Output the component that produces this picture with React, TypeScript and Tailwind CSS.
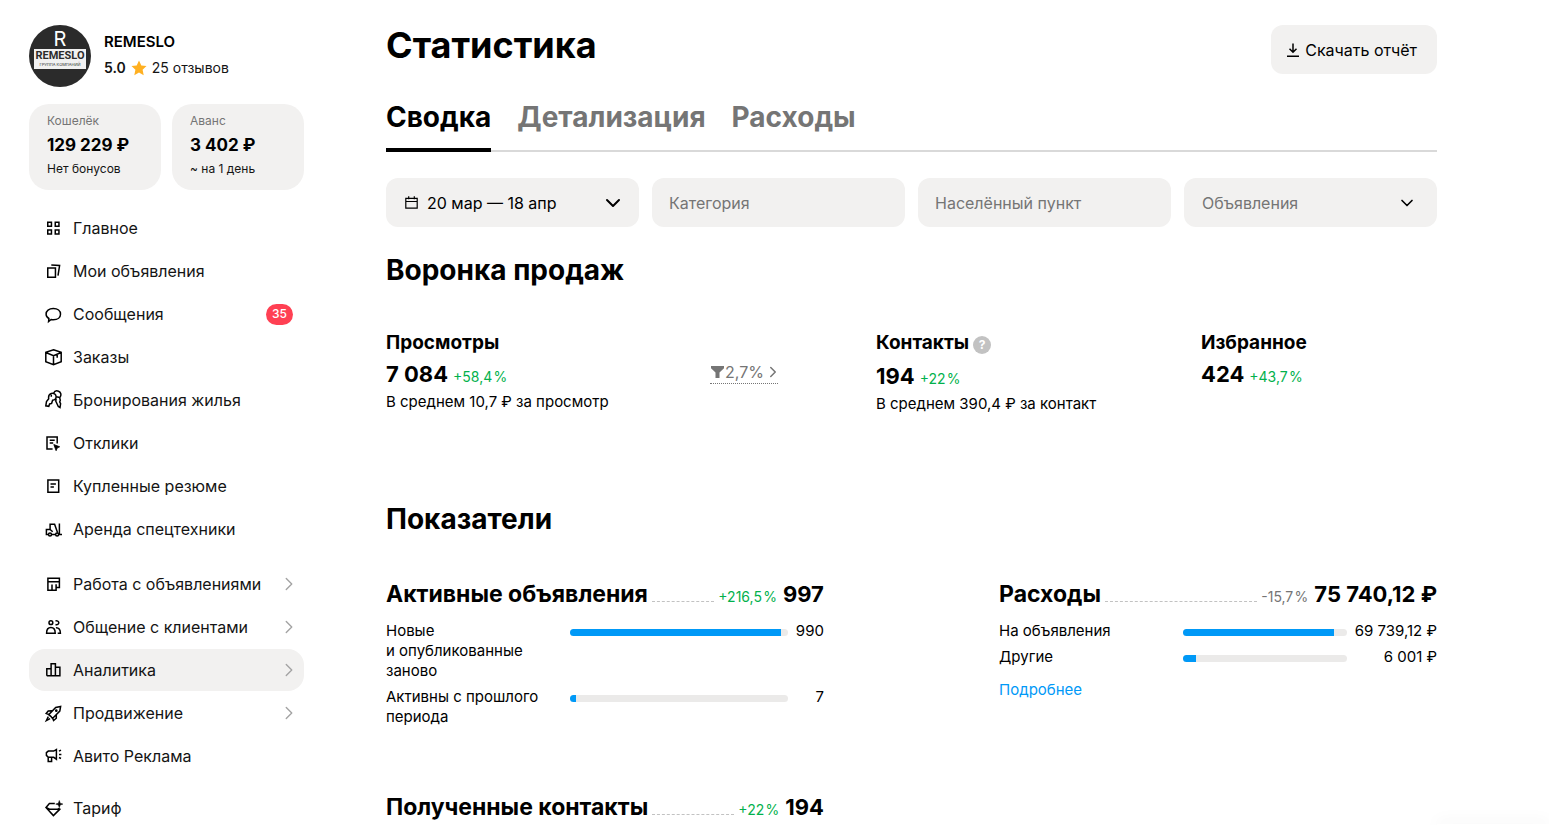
import type { ReactNode } from 'react'
import { ChevronDown, ChevronRight } from 'lucide-react'

type NavItem = { label: string; icon: ReactNode; badge?: number; nested?: boolean; active?: boolean }

const mainNav: NavItem[] = [
  {
    label: 'Главное',
    icon: <path d="M3.75 4.25h3.7v4h-3.7zM11.25 4.25h3.7v4h-3.7zM3.75 12h3.7v4h-3.7zM11.25 12h3.7v4h-3.7z" />,
  },
  {
    label: 'Мои объявления',
    icon: <path d="M3.75 7h7.7v9.3h-7.7zM7.3 4l8.3.5-1.6 10.2" />,
  },
  {
    label: 'Сообщения',
    badge: 35,
    icon: <path d="M4.6 17.6l.3-3.1C3 13.4 2.1 11.9 2.1 10.2c0-3.2 2.8-5.6 7.2-5.6s7.2 2.4 7.2 5.6-2.8 5.6-7.2 5.6c-.8 0-1.5-.1-2.2-.3z" />,
  },
  {
    label: 'Заказы',
    icon: <path d="M9.5 2.7l7.7 2.6v9.4l-7.7 3.1-7.7-3.1V5.3zM1.8 5.5l7.7 3.3 7.7-3.3M9.5 8.8v8.8M13.2 7.2v3.6" />,
  },
  {
    label: 'Бронирования жилья',
    icon: (
      <path d="M1.8 15.8l.7-4.3 2.2-2.7c-.4-2.6.5-4.8 2.5-5.4 2.6-.7 5 .9 4.9 3.3-.1 2.2-1.6 3.4-3.5 3.5l-1 3.3-2 .5-.8 2.3zM7.3 4.5v2.2M9.6 3.2c.8-1.9 3-2.7 4.9-2 2.3.9 3 3.5 1.8 5.5l-.7.8.7 2.8-.6 1.6.9 1.7-.6 3.9-1.7-1-2.5-5.3.3-2.5M12.5 6.8l3.2.8" />
    ),
  },
  {
    label: 'Отклики',
    icon: (
      <>
        <path d="M13.2 10.5V3.9H3v12.2h5.6M5.7 7.2h5M5.7 10h3.5" />
        <path d="M9.8 11.5l5.9 2.3-2.5 1.2-1.1 2.7z" fill="currentColor" strokeWidth="0.8" />
      </>
    ),
  },
  {
    label: 'Купленные резюме',
    icon: <path d="M3.9 4.1h10.8v12.1H3.9zM6.5 8h5.4M6.5 11h3.4" />,
  },
  {
    label: 'Аренда спецтехники',
    icon: (
      <>
        <path d="M4.2 15.4H2.4v-4.9h3.7V5.3h4.5l3 8.4M6.1 10.5l2.6 2.3M7.8 15.4h3.6M15.4 4.5v11.1H18" />
        <circle cx="6" cy="15.5" r="1.5" />
        <circle cx="13.1" cy="15.5" r="1.5" />
      </>
    ),
  },
]

const toolsNav: NavItem[] = [
  {
    label: 'Работа с объявлениями',
    nested: true,
    icon: <path d="M15.4 8v5.4h-3.3M3.9 8v8.3h8.2v-6M3.9 4.2h11.5v3.6H3.9zM8 16.2v-5.6" />,
  },
  {
    label: 'Общение с клиентами',
    nested: true,
    icon: (
      <>
        <circle cx="6.9" cy="5.7" r="1.9" />
        <path d="M11.5 4c1.6-.6 3.3.2 3.3 1.7s-1.6 2.4-3.3 1.8M2.6 16.2c0-3.5 1.6-5.6 4.3-5.6s4.3 2.1 4.3 5.6zM11.9 10.7c2.9-.2 4.5 1.9 4.5 5.5h-2.7" />
      </>
    ),
  },
  {
    label: 'Аналитика',
    nested: true,
    active: true,
    icon: <path d="M2.8 15.7V8.8h4.3v6.9M7.1 15.7V3.8h4.3v11.9M11.4 7.2h4.5v8.5H2.8" />,
  },
  {
    label: 'Продвижение',
    nested: true,
    icon: (
      <>
        <path d="M16.6 3.5l-.8 4.6-7.3 7.4-1.7-2.1-2.1-1.7 7-7.2zM8 7.8l-3.8.2-2 2.4 2.7 1.1M12.3 11.6v3.6l-2.7 2.3-.9-2.3M4.3 13.7l-1.9 3.8 3.7-1.8" />
        <circle cx="12.3" cy="7.7" r="0.6" fill="currentColor" />
      </>
    ),
  },
  {
    label: 'Авито Реклама',
    icon: <path d="M12.4 3.6v9.6L9.7 11.3H4.3L2.4 9.4V6.7l1.9-1.6h5.4zM4.2 11.3v4.2h3.4v-4.2M15 5.2l2-1M15 8.4h2.4M15 11.5l2 1" />,
  },
]

const tariffNav: NavItem[] = [
  {
    label: 'Тариф',
    icon: (
      <>
        <path d="M10.8 5.6H5.4L2 9.4l7.4 8.2 7-7M2 9.4l3.5 1.8h8.2l1.7-.9" />
        <path d="M15.3 2.5l.9 2.7 2.7.9-2.7.9-.9 2.7-.9-2.7-2.7-.9 2.7-.9z" fill="currentColor" strokeWidth="0.5" />
      </>
    ),
  },
]

function NavGroup({ items }: { items: NavItem[] }) {
  return (
    <ul className="flex flex-col gap-px">
      {items.map((item) => (
        <li key={item.label}>
          <a
            href="#"
            className={`flex h-[42px] items-center gap-[9px] rounded-2xl pl-[15px] pr-[11px] text-base text-[#141414] ${
              item.active ? 'bg-[#f2f1f0]' : ''
            }`}
          >
            <svg width="20" height="20" viewBox="0 0 20 20" fill="none" stroke="currentColor" strokeWidth="1.5" className="shrink-0 text-black">
              {item.icon}
            </svg>
            <span className="flex-1 whitespace-nowrap">{item.label}</span>
            {item.badge && (
              <span className="flex h-[21px] w-[27px] items-center justify-center rounded-full bg-[#ff4053] text-xs font-medium text-white">
                {item.badge}
              </span>
            )}
            {item.nested && <ChevronRight size={22} strokeWidth={1.5} className="-mr-[7px] shrink-0 text-[#a3a3a3]" />}
          </a>
        </li>
      ))}
    </ul>
  )
}

function Wallet({ title, amount, note }: { title: string; amount: string; note: string }) {
  return (
    <a href="#" className="flex h-[86px] flex-1 flex-col rounded-[20px] bg-[#f2f1f0] pl-[18px] pt-2">
      <span className="text-xs leading-[18px] text-[#757575]">{title}</span>
      <span className="text-[17px] font-bold leading-[30px]">{amount}</span>
      <span className="text-xs leading-[18px] text-[#141414]">{note}</span>
    </a>
  )
}

// hair space between the number and the percent sign
function Delta({ value }: { value: string }) {
  return (
    <span className={`text-sm font-normal ${value.startsWith('+') ? 'text-[#02b14c]' : 'text-[#757575]'}`}>
      {value}
      {'\u200a%'}
    </span>
  )
}

function FunnelMetric({ title, value, delta, note, hint }: { title: string; value: string; delta: string; note?: string; hint?: boolean }) {
  return (
    <div>
      <h3 className={`flex items-center gap-1 text-[19px] font-bold leading-7 ${hint ? 'mb-[2px]' : ''}`}>
        {title}
        {hint && (
          <button aria-label="Подсказка" className="mt-1 flex size-[18px] items-center justify-center rounded-full bg-[#c2c2c2] text-xs font-bold text-white">
            ?
          </button>
        )}
      </h3>
      <p className="flex items-baseline gap-[5px] text-[22px] font-bold leading-[35px]">
        {value} <Delta value={delta} />
      </p>
      {note && <p className="text-[15px] leading-5">{note}</p>}
    </div>
  )
}

type Row = { label: string; value: string; percent: number }

function Indicator({ title, total, delta, rows = [], children }: { title: string; total: string; delta: string; rows?: Row[]; children?: ReactNode }) {
  return (
    <section>
      <div className="flex items-baseline font-bold leading-8">
        <h3 className="text-[23px] leading-8">{title}</h3>
        <span className="mx-1 min-w-4 flex-1 border-b border-dashed border-[#c2c2c2]" />
        <Delta value={delta} />
        <span className="ml-[6px] text-[22px]">{total}</span>
      </div>
      <div className="mt-[11px] grid grid-cols-[42%_1fr_auto] gap-y-[6px] text-[15px] leading-5">
        {rows.map((row) => (
          <div key={row.label} className="col-span-3 grid grid-cols-subgrid">
            <span className="pr-7">{row.label}</span>
            <div className="mt-2 h-[7px] overflow-hidden rounded-full bg-[#ebeae9]">
              <div className="h-full bg-[#0099f7]" style={{ width: `${row.percent}%` }} />
            </div>
            <span className="pl-2 text-right">{row.value}</span>
          </div>
        ))}
      </div>
      {children}
    </section>
  )
}

export default function App() {
  const tabs = ['Сводка', 'Детализация', 'Расходы']
  const field = 'h-[49px] w-full rounded-xl bg-[#f2f1f0] text-base'

  return (
    <div className="flex min-h-screen gap-[82px] bg-white pl-[29px] pr-28 pt-[25px] font-['Inter','Noto_Sans',sans-serif] text-black">
      <aside className="w-[275px] shrink-0">
        <div className="flex items-center gap-[13px]">
          <div className="flex size-[62px] flex-col items-center overflow-hidden rounded-full bg-[#2b2b2b] pt-[5px]">
            <span className="text-xl leading-[19px] text-white">R</span>
            <div className="flex h-5 w-[52px] flex-col items-center bg-[#f1f1f1] text-[#2b2b2b]">
              <span className="font-[Roboto] text-[11px] font-bold leading-[14px]">REMESLO</span>
              <span className="text-[4px] leading-[4px]">ГРУППА КОМПАНИЙ</span>
            </div>
          </div>
          <div className="pb-[2px]">
            <p className="text-[15px] font-semibold leading-[26px]">REMESLO</p>
            <p className="flex items-center text-sm leading-[26px] text-[#141414]">
              <span className="font-semibold">5.0</span>
              <svg width="16" height="16" viewBox="0 0 16 16" fill="#ffb021" className="mx-[5px]">
                <path d="M8 .5l2.3 5 5.2.6-3.9 3.6 1.1 5.5L8 12.5l-4.7 2.7 1.1-5.5L.5 6.1l5.2-.6z" />
              </svg>
              <a href="#">25 отзывов</a>
            </p>
          </div>
        </div>

        <div className="mt-[17px] flex gap-[11px]">
          <Wallet title="Кошелёк" amount="129 229 ₽" note="Нет бонусов" />
          <Wallet title="Аванс" amount="3 402 ₽" note="~ на 1 день" />
        </div>

        <nav className="mt-[17px] flex flex-col">
          <NavGroup items={mainNav} />
          <div className="mb-[10px] mt-[13px]">
            <NavGroup items={toolsNav} />
          </div>
          <NavGroup items={tariffNav} />
        </nav>
      </aside>

      <main className="min-w-0 flex-1">
        <header className="flex items-start justify-between">
          <h1 className="text-4xl font-bold leading-10">Статистика</h1>
          <button className="flex h-[49px] items-center gap-1 rounded-xl bg-[#f2f1f0] pl-[14px] pr-5 text-base">
            <svg width="16" height="16" viewBox="0 0 16 16" fill="none" stroke="currentColor" strokeWidth="1.5">
              <path d="M8 1.5v8.5M4.5 6.8L8 10.3l3.5-3.5M2 14.2h12" />
            </svg>
            Скачать отчёт
          </button>
        </header>

        <div role="tablist" className="mt-[21px] flex gap-[26px] border-b-2 border-[#d9d9d9]">
          {tabs.map((tab, i) => (
            <button
              key={tab}
              role="tab"
              aria-selected={i === 0}
              className={`-mb-[2px] h-[57px] border-b-4 pb-[10px] text-[28px] font-bold leading-10 ${
                i === 0 ? 'border-black' : 'border-transparent text-[#757575]'
              }`}
            >
              {tab}
            </button>
          ))}
        </div>

        <div className="mt-[26px] grid grid-cols-4 gap-[13px]">
          <button className={`${field} flex items-center gap-[9px] pl-[19px] pr-[14px]`}>
            <svg width="13" height="13" viewBox="0 0 13 13" fill="none" stroke="currentColor" strokeWidth="1.2">
              <path d="M.8 2.3h11.4v9.9H.8zM.8 5.5h11.4M3.7.3v3M9.3.3v3" />
            </svg>
            20 мар — 18 апр
            <ChevronDown size={24} className="ml-auto" />
          </button>
          <input aria-label="Категория" placeholder="Категория" className={`${field} px-[17px] placeholder:text-[#757575]`} />
          <input aria-label="Населённый пункт" placeholder="Населённый пункт" className={`${field} px-[17px] placeholder:text-[#757575]`} />
          <div className="relative">
            <select aria-label="Объявления" className={`${field} appearance-none pl-[18px] pr-12 text-[#757575]`}>
              <option>Объявления</option>
            </select>
            <ChevronDown size={20} className="pointer-events-none absolute right-5 top-[15px]" />
          </div>
        </div>

        <h2 className="mt-[23px] text-[28px] font-bold leading-10">Воронка продаж</h2>
        <div className="mt-[39px] grid min-h-[120px] grid-cols-[324fr_166fr_325fr_236fr]">
          <FunnelMetric title="Просмотры" value="7 084" delta="+58,4" note="В среднем 10,7 ₽ за просмотр" />
          <div className="pt-8">
            <button className="flex h-[23px] items-center border-b border-dotted border-[#757575] text-base text-[#757575]">
              <svg width="15" height="14" viewBox="0 0 15 14" fill="currentColor">
                <path d="M1 1h13v2.2L9.5 7.5V13h-4V7.5L1 3.2z" />
              </svg>
              2,7%
              <ChevronRight size={18} className="-mr-1" />
            </button>
          </div>
          <FunnelMetric title="Контакты" value="194" delta="+22" note="В среднем 390,4 ₽ за контакт" hint />
          <FunnelMetric title="Избранное" value="424" delta="+43,7" />
        </div>

        <h2 className="mt-[50px] text-[28px] font-bold leading-10">Показатели</h2>
        <div className="mt-[39px] grid grid-cols-12 gap-y-16">
          <div className="col-span-5">
            <Indicator
              title="Активные объявления"
              delta="+216,5"
              total="997"
              rows={[
                { label: 'Новые и\u00a0опубликованные заново', value: '990', percent: 97 },
                { label: 'Активны с прошлого периода', value: '7', percent: 3 },
              ]}
            />
          </div>
          <div className="col-span-5 col-start-8">
            <Indicator
              title="Расходы"
              delta="-15,7"
              total="75 740,12 ₽"
              rows={[
                { label: 'На объявления', value: '69 739,12 ₽', percent: 92 },
                { label: 'Другие', value: '6 001 ₽', percent: 8 },
              ]}
            >
              <a href="#" className="mt-[13px] inline-block text-[15px] leading-5 text-[#0099f7]">
                Подробнее
              </a>
            </Indicator>
          </div>
          <div className="col-span-5">
            <Indicator title="Полученные контакты" delta="+22" total="194" />
          </div>
        </div>
      </main>

      {/* collapsed messenger panel, only its shadow shows */}
      <div className="fixed bottom-0 right-0 h-px w-28 bg-white shadow-[0_0_16px_rgba(0,0,0,0.3)]" />
    </div>
  )
}
